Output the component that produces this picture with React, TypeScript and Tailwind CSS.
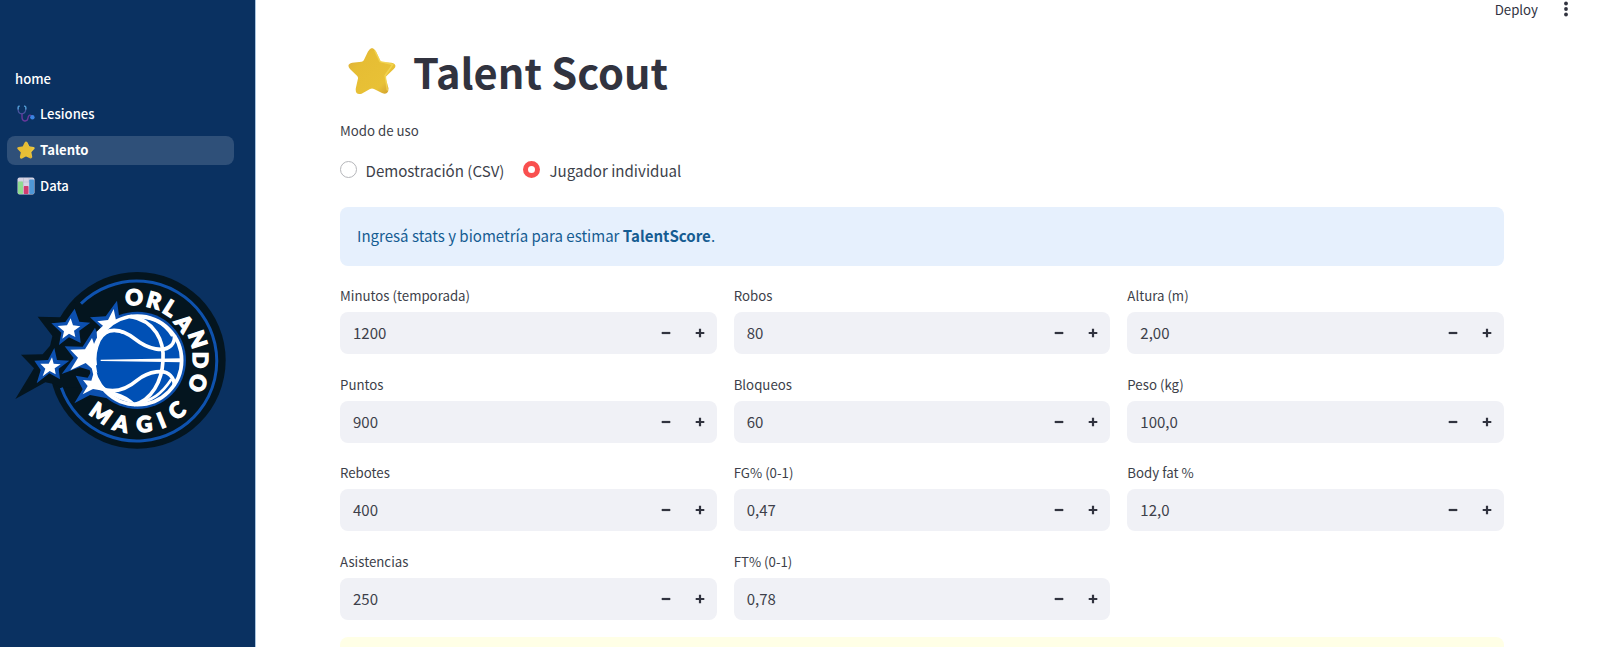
import React from "react";

const fieldRows: (readonly [string, string] | null)[][] = [
  [["Minutos (temporada)", "1200"], ["Robos", "80"], ["Altura (m)", "2,00"]],
  [["Puntos", "900"], ["Bloqueos", "60"], ["Peso (kg)", "100,0"]],
  [["Rebotes", "400"], ["FG% (0-1)", "0,47"], ["Body fat %", "12,0"]],
  [["Asistencias", "250"], ["FT% (0-1)", "0,78"], null],
];

function StarIcon({ className }: { className: string }) {
  return (
    <svg viewBox="0 0 48 48" className={className} aria-hidden="true">
      <defs>
        <linearGradient id="starFill" x1="0" y1="0" x2="1" y2="1">
          <stop offset="0" stopColor="#d9a73f" />
          <stop offset="0.3" stopColor="#e6bd34" />
          <stop offset="0.75" stopColor="#e8c136" />
          <stop offset="1" stopColor="#c9932c" />
        </linearGradient>
      </defs>
      <path
        d="M20 4.500Q24-2.500 28 4.500L32.200 13.500Q33 14.800 34.500 15L43.500 15.800Q50 17.500 45.800 22L38.500 29Q37.500 30 37.800 31.500L40.500 41.200Q40.500 48.500 34 46L26 42Q24 41 22 42L13.600 46.700Q7 48.500 7.800 41.200L10 31.500Q10.200 30 9.200 29L2 22Q-2 17.200 4.300 15.800L13.500 14.800Q15 14.600 15.800 13.300Z"
        fill="url(#starFill)"
      />
      <path d="M27 4L32 14.500L44.800 17.400L37.200 28.500L39.300 43" fill="none" stroke="#f6da57" strokeWidth="1.500" strokeLinejoin="round" strokeLinecap="round" opacity="0.75" />
    </svg>
  );
}

function StethoscopeIcon() {
  return (
    <svg viewBox="0 0 18 18" className="size-[18px]" fill="none" strokeLinecap="round" aria-hidden="true">
      <path d="M2 1.200C.8 1.500.8 3 1 4.500C1.500 8 3.200 8.800 4.600 8.800C6.500 8.800 8.300 7.500 8.800 4.500C9 2.500 9 1.500 7.500 1.200" stroke="#49549f" strokeWidth="1.300" />
      <path d="M1.200 4V2.200Q1.200 1.200 2.200 1.200M8.800 4V2.200Q8.800 1.200 7.600 1.200" stroke="#4c9dd0" strokeWidth="1.300" />
      <path d="M5 9V12C5 17.200 10.500 17 11 13C11.300 10 13 9.500 14.500 11" stroke="#69389c" strokeWidth="1.400" />
      <circle cx="15.400" cy="12.300" r="2.200" fill="#3b83e2" />
    </svg>
  );
}

function ChartIcon() {
  return (
    <svg viewBox="0 0 18 18" className="size-[18px]" aria-hidden="true">
      <rect x="0.500" y="0.500" width="17" height="17" rx="2" fill="#d5d3e4" />
      <path d="M6.500 1V9M12 1V5M1 5H17" stroke="#bab8ce" strokeWidth="0.600" />
      <rect x="1" y="4.500" width="5" height="12.500" rx="0.800" fill="#8fdc90" />
      <rect x="6.700" y="9" width="4.800" height="8" rx="0.800" fill="#d13c70" />
      <rect x="12.200" y="2.500" width="4.800" height="14.500" rx="0.800" fill="#4f97d6" />
    </svg>
  );
}

const badgeLetters: [string, number, number, number][] = [
  ["O", 402, 111, -3],
  ["R", 463, 121, 16],
  ["L", 511, 144, 32],
  ["A", 553, 189, 51],
  ["N", 594, 238, 72],
  ["D", 603, 300, 90],
  ["O", 594, 369, 111],
  ["M", 303, 459, 35],
  ["A", 363, 490, 14],
  ["G", 433, 492, -6],
  ["I", 484, 480, -22],
  ["C", 530, 451, -38],
];

function TeamLogo() {
  return (
    <svg viewBox="0 0 765 600" className="h-[200px] w-[255px]" role="img" aria-label="Orlando Magic">
      <g fill="#04151f">
        <circle cx="412" cy="301" r="265" />
        <path d="M113 170L181 172L224 125L300 200L300 380L185 384L165 373L136 367L46 417L102 325L63 284L128 283L152 255L160 232Z" />
      </g>
      <path d="M243 131A240 240 0 1 1 184 383" fill="none" stroke="#0e52ae" strokeWidth="9" />
      <circle cx="412" cy="301" r="146" fill="#0b4fae" />
      <g fill="#0c50b0">
        <path d="M224 146L238 185L271 188L238 212L242 249L207 232L177 255L184 218L154 190L196 186Z" />
        <path d="M163 264L171 300L208 302L176 326L180 358L148 340L110 370L122 330L103 302L144 300Z" />
        <path d="M351 122L357 167L390 180L320 240L285 225L302 202L270 172L317 169Z" />
        <path d="M285 203L300 240V340L240 322L185 342L221 294L194 259L248 260Z" />
        <path d="M280 325L350 420L270 405L223 430L248 388L227 347L263 353Z" />
      </g>
      <circle cx="412" cy="301" r="133" fill="#0050b5" stroke="#fff" strokeWidth="11" />
      <g fill="#fff">
        <path d="M212 175L219 196L241 199L222 212L226 231L207 221L187 236L192 214L173 198L201 196Z" />
        <path d="M156 292L161 311L182 313L164 325L167 343L149 333L128 349L136 326L121 311L146 311Z" />
        <path d="M341 147L348 181L370 172Q320 190 292 250L290 215L309 197L292 184L324 180Z" />
        <path d="M276 234L289 272L286 305L292 340L257 309L211 331L234 293L211 269L255 268Z" />
        <path d="M280 342L291 352Q300 384 350 398Q380 406 405 430Q353 423 318 394L279 387L248 403L263 378L249 360L274 362Z" />
        <path d="M280 265Q290 228 320 212Q350 203 375 214L370 222Q325 204 302 243Q285 280 291 315L281 320Z" />
        <path d="M302 299L545 295V307L302 303Z" />
      </g>
      <g fill="none" stroke="#fff" strokeWidth="11">
        <path d="M317 216C350 203 378 216 405 237C445 269 493 277 513 257Q526 244 523 226" />
        <path d="M300 384C340 401 378 389 411 361C447 332 495 327 512 347Q525 361 522 377" />
        <path d="M391 169C465 182 493 243 489 301C486 366 454 420 402 434" />
        <path d="M391 171C455 168 492 188 517 228M402 433C457 423 487 400 514 358" strokeWidth="8" />
      </g>
      <g fill="#fff" stroke="#fff" strokeWidth="4" fontFamily="Lato" fontWeight="900" fontSize="65" textAnchor="middle">
        {badgeLetters.map(([letter, x, y, angle], i) => (
          <text key={i} transform={`translate(${x} ${y}) rotate(${angle})`} y="24">{letter}</text>
        ))}
      </g>
    </svg>
  );
}

function NumberField({ label, value }: { label: string; value: string }) {
  return (
    <div className="flex flex-col">
      <div className="flex h-[26px] items-start text-[13.250px] leading-5 text-[#3d3f4a]">{label}</div>
      <div className="flex h-[42px] items-center rounded-[8px] bg-[#f0f1f6] pl-[13px]">
        <span className="flex-1 text-[15px] leading-6 text-[#3d3f4a]">{value}</span>
        <button className="flex h-full w-[34px] items-center justify-center" aria-label="-">
          <svg viewBox="0 0 10 10" className="size-[10px]" stroke="#31333f" strokeWidth="2.200"><path d="M0.700 5H9.300" /></svg>
        </button>
        <button className="flex h-full w-[34px] items-center justify-center" aria-label="+">
          <svg viewBox="0 0 10 10" className="size-[10px]" stroke="#31333f" strokeWidth="2.200"><path d="M0.700 5H9.300M5 0.700V9.300" /></svg>
        </button>
      </div>
    </div>
  );
}

export default function App() {
  return (
    <div className="flex h-[647px] w-[1600px] overflow-hidden bg-white font-['Noto_Sans_CJK_SC','Noto_Sans',sans-serif] text-[#31333f]">
      <aside className="flex w-[256px] shrink-0 flex-col border-r border-[#a9c4df] bg-[#0a3161] text-white">
        <nav className="flex flex-col gap-[7px] pl-[7px] pt-[64px] text-[13.1px] font-medium">
          <a className="flex h-[29px] w-[227px] items-center pl-2">home</a>
          <a className="flex h-[29px] w-[227px] items-center gap-[5px] pb-px pl-[10px]"><StethoscopeIcon />Lesiones</a>
          <a className="flex h-[29px] w-[227px] items-center gap-[5px] rounded-[8px] bg-[#2f5079] pb-px pl-[10px] font-bold"><StarIcon className="size-[18px]" />Talento</a>
          <a className="flex h-[29px] w-[227px] items-center gap-[5px] pb-px pl-[10px]"><ChartIcon />Data</a>
        </nav>
        <div className="mt-[59px]"><TeamLogo /></div>
      </aside>
      <main className="flex flex-1 flex-col pl-[84px]">
        <header className="flex h-[33px] items-center justify-end gap-[26px] pr-[32px] pt-[0px] text-[13.250px]">
          <span className="pb-[5px]">Deploy</span>
          <svg viewBox="0 0 4 16" className="mb-[7px] h-4 w-1" fill="#31333f"><circle cx="2" cy="2.500" r="1.900" /><circle cx="2" cy="8" r="1.900" /><circle cx="2" cy="13.500" r="1.900" /></svg>
        </header>
        <div className="flex w-[1164px] flex-col">
          <h1 className="flex h-[93px] items-center gap-[17px] pl-[8px] text-[41.600px] font-bold leading-none">
            <StarIcon className="size-[48px]" />
            <span>Talent Scout</span>
          </h1>
          <p className="flex h-[26px] items-center text-[13.250px] text-[#3d3f4a]">Modo de uso</p>
          <div className="mt-[13px] flex h-[26px] items-center text-[15.100px] text-[#3d3f4a]">
            <label className="flex items-center gap-[8.500px]"><span className="size-[17px] rounded-full border border-[#b5b6ba]" />Demostración (CSV)</label>
            <label className="ml-[19px] flex items-center gap-[9px]"><span className="size-[17px] rounded-full border-[5.500px] border-[#f9504f]" />Jugador individual</label>
          </div>
          <div className="mt-[24px] flex h-[59px] items-center rounded-[8px] bg-[#e6f0fd] pl-[17px] text-[15.050px] text-[#155c92]">
            <p>Ingresá stats y biometría para estimar <strong className="font-bold">TalentScore</strong>.</p>
          </div>
          <div className="mt-[20px] flex flex-col gap-[20.800px]">
            {fieldRows.map((row, i) => (
              <div key={i} className="grid grid-cols-3 gap-[17px]">
                {row.map((field, j) => field && <NumberField key={j} label={field[0]} value={field[1]} />)}
              </div>
            ))}
          </div>
          <div className="mt-[17px] h-[59px] shrink-0 rounded-[8px] bg-[#ffffe6]" />
        </div>
      </main>
    </div>
  );
}
